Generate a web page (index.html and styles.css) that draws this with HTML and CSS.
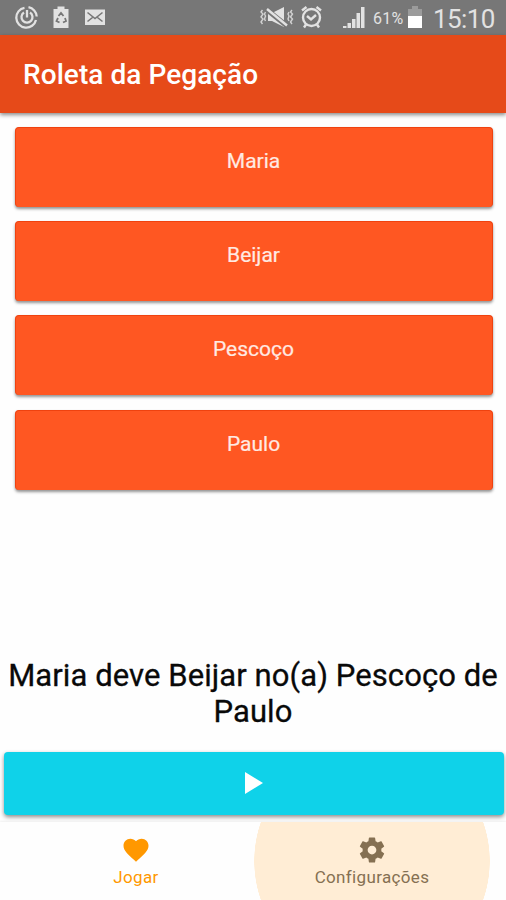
FILE: index.html
```html
<!DOCTYPE html>
<html lang="pt-BR">
<head>
<meta charset="utf-8">
<title>Roleta da Pegação</title>
<link rel="stylesheet" href="styles.css">
</head>
<body>
<div class="status">
  <svg class="status-icons" width="110" height="35" viewBox="0 0 110 35">
    <g fill="none" stroke="#e2e2e2" stroke-width="2.300">
      <path d="M24.500 7.800A10 10 0 1 0 36 20M28.500 7.200A10 10 0 0 1 36.700 16.500"/>
      <path d="M24 12.500A5.500 5.500 0 1 0 30 12.500M27 10v7.500"/>
    </g>
    <path fill="#e2e2e2" d="M53.500 9h4V6.500h7V9h4v19h-15z"/>
    <path fill="none" stroke="#777" stroke-width="1.800" d="M58.500 16l2.500-3 2.500 3M65 18l1 3-3 1.500M59.500 22.500l-3-1.500 1.500-3"/>
    <path fill="#e2e2e2" d="M85 9.500h20v15.500H85z"/>
    <path fill="none" stroke="#777" stroke-width="1.600" d="M87.500 12.500l7.500 6 7.500-6M87.500 21.500l5-4M102.500 21.500l-5-4"/>
  </svg>
  <svg class="status-icons right" width="120" height="35" viewBox="250 0 120 35">
    <path fill="#e2e2e2" d="M268 13h4l12-6v20l-12-6h-4z"/>
    <path stroke="#777" stroke-width="5" d="M266 9l21 17"/>
    <path fill="none" stroke="#e2e2e2" stroke-width="2.400" d="M267 9l20 16.500"/>
    <path fill="none" stroke="#d2d2d2" stroke-width="1.400" d="M262.500 10l-1.500 2 2 2-2 3 2 2-2 3 1.500 2M265.500 12l-1 2 1 2-1 3 1 2M289 12l-1 2 1 2-1 3 1 2M292 10l-1.500 2 2 2-2 3 2 2-2 3 1.500 2"/>
    <g fill="none" stroke="#e2e2e2" stroke-width="2.400">
      <circle cx="311.500" cy="17.500" r="8.500"/>
      <path d="M307 16l4 3.500 5-4.500M302 10.500l4.500-3.500M316.500 7l4.500 3.500M306 24.500l-2 3M317 24.500l2 3"/>
    </g>
    <path fill="#e2e2e2" d="M343 28v-2h3.500v2zM347.500 28v-5h3.500v5zM352 28v-9h3.500v9zM356.500 28V13h3.500v15zM361 28V7h3.500v21z"/>
  </svg>
  <span class="percent">61%</span>
  <svg class="battery" width="16" height="24" viewBox="0 0 16 24">
    <path fill="#9b9b9b" d="M1 4h4V1h6v3h4v8H1z"/>
    <path fill="#fff" d="M1 11h14v12H1z"/>
  </svg>
  <span class="clock">15:10</span>
</div>
<header class="bar"><h1>Roleta da Pegação</h1></header>
<main>
  <div class="cards">
    <div class="card">Maria</div>
    <div class="card">Beijar</div>
    <div class="card">Pescoço</div>
    <div class="card">Paulo</div>
  </div>
  <p class="result">Maria deve Beijar no(a) Pescoço de<br>Paulo</p>
  <button class="play" aria-label="Girar">
    <svg width="20" height="22" viewBox="0 0 20 22"><path fill="#fff" d="M1 0v22l18-11z"/></svg>
  </button>
</main>
<nav class="tabs">
  <div class="tab active">
    <svg width="30" height="30" viewBox="0 0 24 24"><path fill="currentColor" d="M12 21.350l-1.450-1.320C5.400 15.360 2 12.280 2 8.500 2 5.420 4.420 3 7.500 3c1.740 0 3.410.81 4.500 2.090C13.090 3.810 14.760 3 16.500 3 19.580 3 22 5.420 22 8.500c0 3.780-3.400 6.860-8.550 11.540L12 21.350z"/></svg>
    <span class="label">Jogar</span>
  </div>
  <div class="tab ripple">
    <svg width="30" height="30" viewBox="0 0 24 24"><path fill="currentColor" d="M19.430 12.980c.04-.32.07-.64.07-.98s-.03-.66-.07-.98l2.110-1.650c.19-.15.24-.42.12-.64l-2-3.460c-.12-.22-.39-.3-.61-.22l-2.490 1c-.52-.4-1.080-.73-1.690-.98l-.38-2.650C14.460 2.180 14.250 2 14 2h-4c-.25 0-.46.18-.49.42l-.38 2.650c-.61.25-1.170.59-1.690.98l-2.490-1c-.23-.09-.49 0-.61.22l-2 3.460c-.13.22-.07.49.12.64l2.110 1.650c-.04.32-.07.65-.07.98s.03.66.07.98l-2.110 1.650c-.19.15-.24.42-.12.64l2 3.460c.12.22.39.3.61.22l2.490-1c.52.4 1.080.73 1.690.98l.38 2.650c.03.24.24.42.49.42h4c.25 0 .46-.18.49-.42l.38-2.650c.61-.25 1.170-.59 1.690-.98l2.490 1c.23.09.49 0 .61-.22l2-3.460c.12-.22.07-.49-.12-.64l-2.110-1.650zM12 15.500c-1.930 0-3.500-1.570-3.500-3.500s1.570-3.500 3.500-3.500 3.500 1.570 3.500 3.500-1.570 3.500-3.500 3.500z"/></svg>
    <span class="label">Configurações</span>
  </div>
</nav>
</body>
</html>
```
FILE: styles.css
```css
* { box-sizing: border-box; }
body {
  margin: 0;
  height: 900px;
  overflow: hidden;
  display: flex;
  flex-direction: column;
  background: #fefefe;
  font-family: Roboto, "Liberation Sans", sans-serif;
}
.status {
  height: 35px;
  flex: none;
  display: flex;
  align-items: center;
  background: #777;
  color: #e2e2e2;
}
.status-icons { flex: none; }
.right { margin-left: 140px; }
.percent { width: 35px; margin-left: 3px; font-size: 16px; letter-spacing: 0.3px; padding-top: 2px; }
.battery { flex: none; margin: 0 0 1px -1px; }
.clock { margin-left: 10px; padding-top: 3px; font-size: 26px; letter-spacing: -0.6px; }
.bar {
  height: 78px;
  flex: none;
  display: flex;
  align-items: center;
  padding: 1px 0 0 23px;
  background: #e64a19;
  box-shadow: 0 2px 4px rgba(0, 0, 0, 0.45);
}
.bar h1 { margin: 0; color: #fff; font-size: 28px; line-height: 37px; font-weight: 500; letter-spacing: 0.06px; }
main { flex: 1; display: flex; flex-direction: column; }
.cards { display: grid; gap: 14.200px; padding: 14px 13.500px 0 14.500px; }
.card {
  height: 80px;
  padding-top: 21px;
  border-radius: 4px;
  border: solid #ef420f;
  border-width: 1px 1px 0;
  background: #ff5722;
  box-shadow: 0 2px 3px rgba(0, 0, 0, 0.42);
  color: #ffeae3;
  font-size: 21px;
  line-height: 25px;
  text-align: center;
  -webkit-text-stroke: 0.2px #ffeae3;
}
.result {
  margin: auto 0 22px;
  color: #090909;
  font-size: 31px;
  line-height: 36px;
  letter-spacing: 0.08px;
  text-align: center;
  white-space: nowrap;
  -webkit-text-stroke: 0.3px #090909;
}
.play {
  height: 63px;
  flex: none;
  margin: 0 2px 7px 4px;
  padding: 0 1px 1px 0;
  display: flex;
  align-items: center;
  justify-content: center;
  border: 0;
  border-radius: 4px;
  background: #0fd2e9;
  box-shadow: 0 2px 4px rgba(0, 0, 0, 0.45);
}
.tabs { height: 78px; flex: none; display: flex; padding: 0 16px 0 18px; overflow: hidden; box-shadow: 0 -1px 2px rgba(0, 0, 0, 0.06); }
.tab { flex: 1; display: flex; flex-direction: column; align-items: center; padding-top: 13px; }
.active { color: #ff9800; }
.ripple {
  color: #857052;
  background: radial-gradient(circle at 50% 39px, #ffedd5 117.500px, transparent 118px);
}
.label { font-size: 17px; line-height: 22px; margin-top: 1px; letter-spacing: 0.35px; }
```
